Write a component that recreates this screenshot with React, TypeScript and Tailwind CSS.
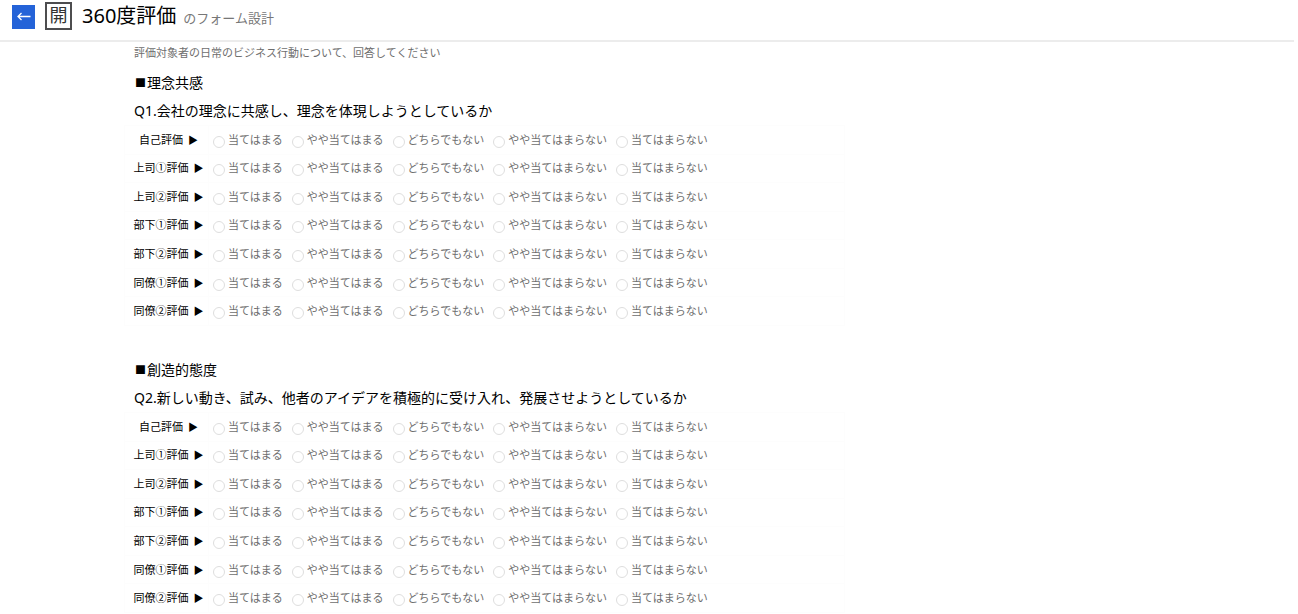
import { useState } from 'react';

interface Section {
  id: string;
  title: string;
  question: string;
}

const sections: Section[] = [
  {
    id: 'q1',
    title: '理念共感',
    question: 'Q1.会社の理念に共感し、理念を体現しようとしているか',
  },
  {
    id: 'q2',
    title: '創造的態度',
    question: 'Q2.新しい動き、試み、他者のアイデアを積極的に受け入れ、発展させようとしているか',
  },
];

const raters = [
  '自己評価',
  '上司①評価',
  '上司②評価',
  '部下①評価',
  '部下②評価',
  '同僚①評価',
  '同僚②評価',
];

const choices = [
  '当てはまる',
  'やや当てはまる',
  'どちらでもない',
  'やや当てはまらない',
  '当てはまらない',
];

function Header() {
  return (
    <header className="mr-1 flex h-[42px] items-start border-b-2 border-[#ececec] pl-3">
      <button
        type="button"
        aria-label="戻る"
        className="mt-[5px] flex h-6 w-[23px] items-center justify-center bg-[#2463d8] text-white"
      >
        <svg
          width="14"
          height="10"
          viewBox="0 0 14 10"
          fill="none"
          stroke="currentColor"
          strokeWidth="1.3"
          aria-hidden="true"
        >
          <path d="M13.5 4.5H1M4.5 1L1 4.5L4.5 8" />
        </svg>
      </button>
      <div className="ml-[10px] mt-[2px] flex h-7 w-[27px] items-center justify-center border-2 border-[#4d4d4f] pb-[2px] text-lg leading-none text-[#333]">
        開
      </div>
      <div className="ml-[10px] flex h-[34px] items-baseline gap-[7px]">
        <h1 className="text-xl leading-8 text-black">360度評価</h1>
        <span className="text-[13px] text-[#777]">のフォーム設計</span>
      </div>
    </header>
  );
}

function QuestionSection({ section }: { section: Section }) {
  const [answers, setAnswers] = useState<Record<string, string>>({});

  return (
    <section>
      <h2 className="flex h-7 items-center gap-px pl-[11px] text-sm text-black">
        <span className="text-[11px]">■</span>
        {section.title}
      </h2>
      <h3 className="flex h-7 items-center pl-[10px] text-sm text-black">{section.question}</h3>
      <table className="h-[201px] border-collapse">
        <tbody>
          {raters.map((rater) => (
            <tr key={rater}>
              <th
                scope="row"
                className="w-[84px] border border-[#fdfdfd] py-0 pr-0 pl-1 text-[11px] leading-4 font-normal text-black"
              >
                <div className="flex items-center justify-center gap-[5px] whitespace-nowrap">
                  {rater}
                  <span className="text-[10px]">▶</span>
                </div>
              </th>
              <td className="w-[636px] border border-[#fdfdfd] py-0 pr-0 pl-1">
                <div className="flex gap-[9px]">
                  {choices.map((choice) => (
                    <label
                      key={choice}
                      className="flex items-center gap-[3px] text-[11px] leading-4 whitespace-nowrap text-[#6e6e6e]"
                    >
                      <input
                        type="radio"
                        name={`${section.id}-${rater}`}
                        value={choice}
                        checked={answers[rater] === choice}
                        onChange={() => setAnswers({ ...answers, [rater]: choice })}
                        className="mt-1 size-3 appearance-none rounded-full border border-[#dedede] bg-white checked:border-4 checked:border-[#2463d8]"
                      />
                      {choice}
                    </label>
                  ))}
                </div>
              </td>
            </tr>
          ))}
        </tbody>
      </table>
    </section>
  );
}

export default function App() {
  return (
    <div className="bg-white font-['Noto_Sans','Noto_Sans_CJK_JP',sans-serif]" lang="ja">
      <Header />
      <main className="pl-[124px]">
        <p className="mb-[5px] flex h-[22px] items-center pl-[10px] text-[11px] text-[#6e6e6e]">
          評価対象者の日常のビジネス行動について、回答してください
        </p>
        <div className="flex flex-col gap-[30px]">
          {sections.map((section) => (
            <QuestionSection key={section.id} section={section} />
          ))}
        </div>
      </main>
    </div>
  );
}
